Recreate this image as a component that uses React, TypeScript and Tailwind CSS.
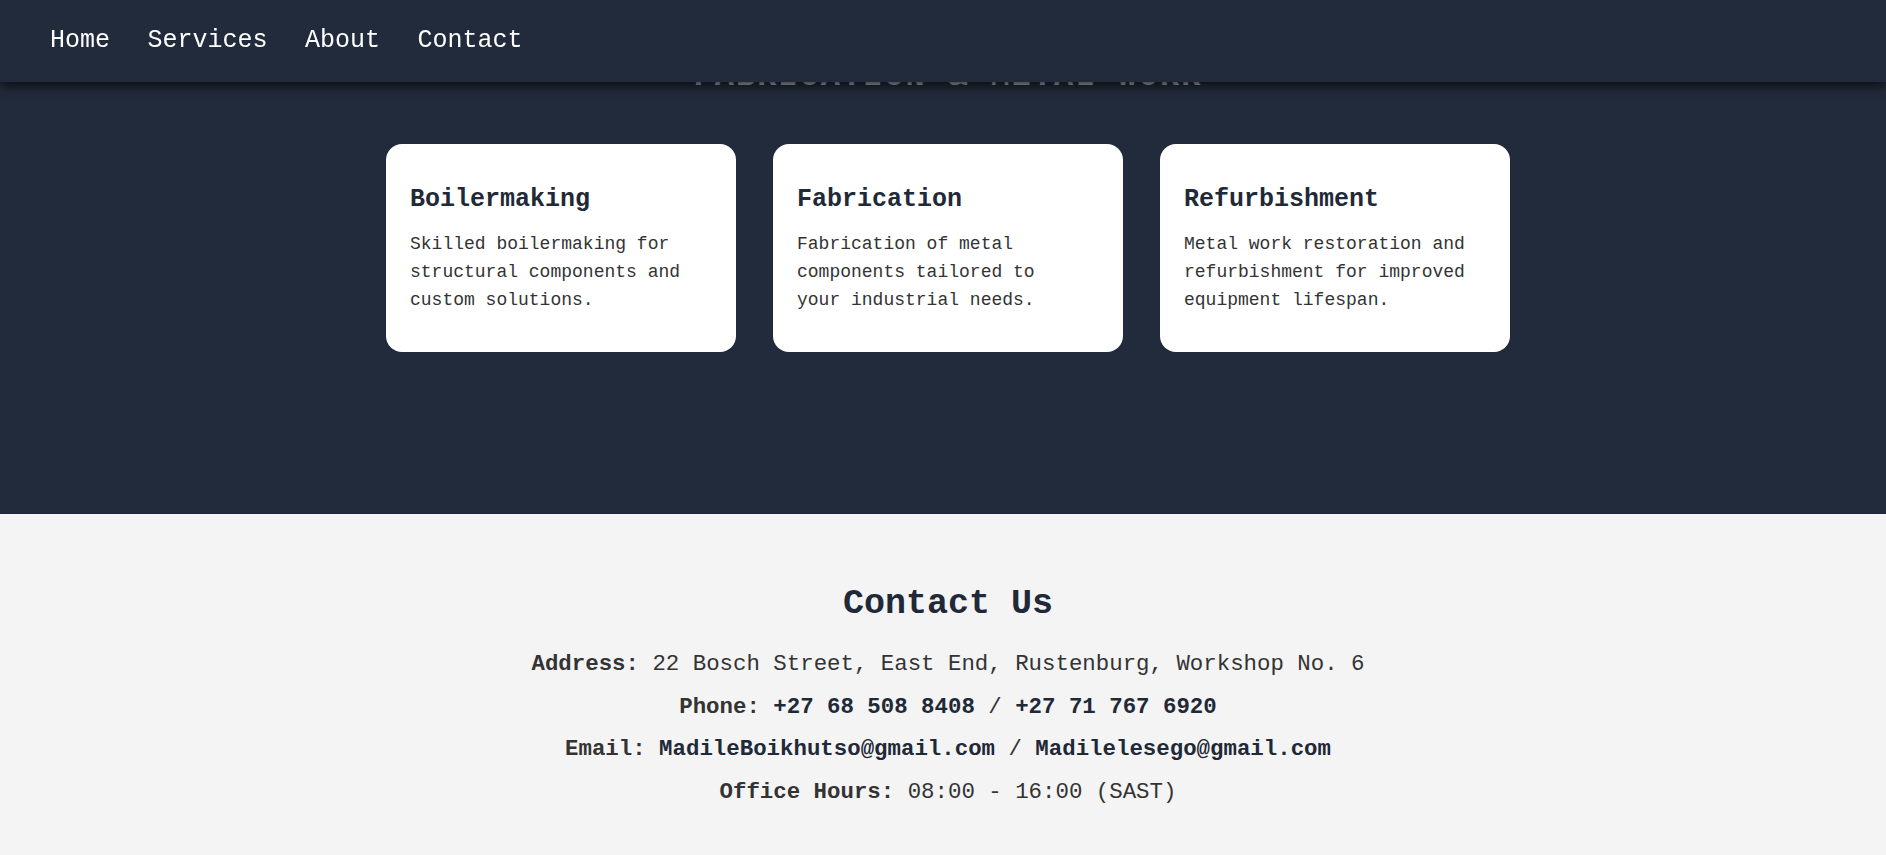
const services = [
  {
    title: 'Boilermaking',
    text: 'Skilled boilermaking for structural components and custom solutions.',
  },
  {
    title: 'Fabrication',
    text: 'Fabrication of metal components tailored to your industrial needs.',
  },
  {
    title: 'Refurbishment',
    text: 'Metal work restoration and refurbishment for improved equipment lifespan.',
  },
];

function Navbar() {
  return (
    <nav className="fixed top-0 left-0 right-0 z-10 h-[82px] bg-[#222b3b] shadow-[0_4px_10px_rgba(0,0,0,0.7)] flex items-center pb-[1px] pl-[50px] gap-[37.5px] text-[25px] text-white">
      <a href="#home">Home</a>
      <a href="#services">Services</a>
      <a href="#about">About</a>
      <a href="#contact">Contact</a>
    </nav>
  );
}

function Services() {
  return (
    <section id="services" className="bg-[#222b3b] pt-[57px] pb-[162px] pl-[10px]">
      <h2 className="text-center text-[32px] leading-[40px] font-bold tracking-[2px] uppercase text-[#a9adb5] mb-[47px]">
        Fabrication &amp; Metal Work
      </h2>
      <div className="flex justify-center gap-[37px]">
        {services.map((s) => (
          <div key={s.title} className="w-[350px] bg-white rounded-2xl pt-[41px] pl-6 pr-[40px] pb-[38px]">
            <h3 className="text-[25px] leading-[30px] font-bold text-[#1f2937]">{s.title}</h3>
            <p className="mt-[15px] text-[18px] leading-[28px] text-[#333]">{s.text}</p>
          </div>
        ))}
      </div>
    </section>
  );
}

function Contact() {
  return (
    <section id="contact" className="bg-[#f4f4f4] pt-[69px] pb-[40px] pl-[10px] text-center text-[22.4px] leading-[42.5px] text-[#333]">
      <h2 className="text-[35px] leading-[42px] font-bold text-[#1f2937] mb-[18px]">Contact Us</h2>
      <p>
        <strong>Address:</strong> 22 Bosch Street, East End, Rustenburg, Workshop No. 6
      </p>
      <p>
        <strong>Phone:</strong> <a href="tel:+27685088408" className="font-bold text-[#1f2937]">+27 68 508 8408</a> /{' '}
        <a href="tel:+27717676920" className="font-bold text-[#1f2937]">+27 71 767 6920</a>
      </p>
      <p>
        <strong>Email:</strong>{' '}
        <a href="mailto:MadileBoikhutso@gmail.com" className="font-bold text-[#1f2937]">MadileBoikhutso@gmail.com</a> /{' '}
        <a href="mailto:Madilelesego@gmail.com" className="font-bold text-[#1f2937]">Madilelesego@gmail.com</a>
      </p>
      <p>
        <strong>Office Hours:</strong> 08:00 - 16:00 (SAST)
      </p>
    </section>
  );
}

export default function App() {
  return (
    <div className="min-h-screen bg-[#f4f4f4] font-['Liberation_Mono','DejaVu_Sans_Mono',monospace]">
      <Navbar />
      <Services />
      <Contact />
    </div>
  );
}
